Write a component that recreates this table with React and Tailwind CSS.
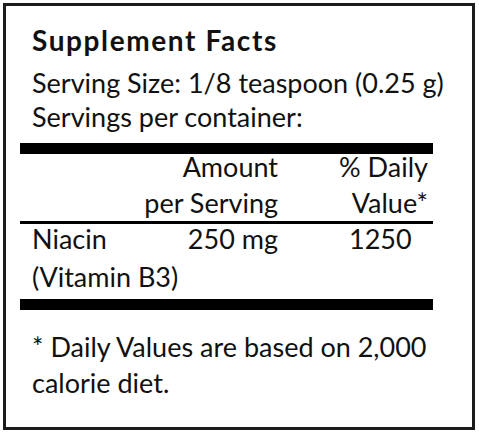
export default function App() {
  return (
    <div className="w-[479px] h-[435px] bg-white pt-[3px] pl-[3px]">
      <div
        className="w-[472px] h-[427px] border-[3px] border-[#1c1c1c] pt-[8px] pl-[14px] pr-[39px] text-[#111] text-[27px]"
        style={{ fontFamily: 'Lato, "Open Sans", sans-serif' }}
      >
        <div className="pl-3 whitespace-nowrap">
          <div className="font-bold text-[28px] leading-[52px] tracking-[1.6px]">Supplement Facts</div>
          <div className="leading-[34px]">Serving Size: 1/8 teaspoon (0.25 g)</div>
          <div className="leading-[34px]">Servings per container:</div>
        </div>

        <div className="mt-[9px] h-[11px] bg-black" />

        <div className="-mt-[5px] grid grid-cols-[116px_142px_155px] leading-[36px] whitespace-nowrap">
          <div />
          <div className="text-right">
            Amount
            <br />
            per Serving
          </div>
          <div className="text-right pr-[5px]">
            % Daily
            <br />
            Value*
          </div>
        </div>

        <div className="h-[3px] bg-black" />

        <div className="-mt-[4px] grid grid-cols-[116px_142px_155px] leading-[38px] whitespace-nowrap">
          <div className="pl-3">
            Niacin
            <br />
            (Vitamin B3)
          </div>
          <div className="text-right">250 mg</div>
          <div className="pl-[71px]">1250</div>
        </div>

        <div className="mt-[3px] h-[11px] bg-black" />

        <div className="mt-[19px] pl-3 leading-[36px] whitespace-nowrap">
          * Daily Values are based on 2,000
          <br />
          calorie diet.
        </div>
      </div>
    </div>
  )
}
